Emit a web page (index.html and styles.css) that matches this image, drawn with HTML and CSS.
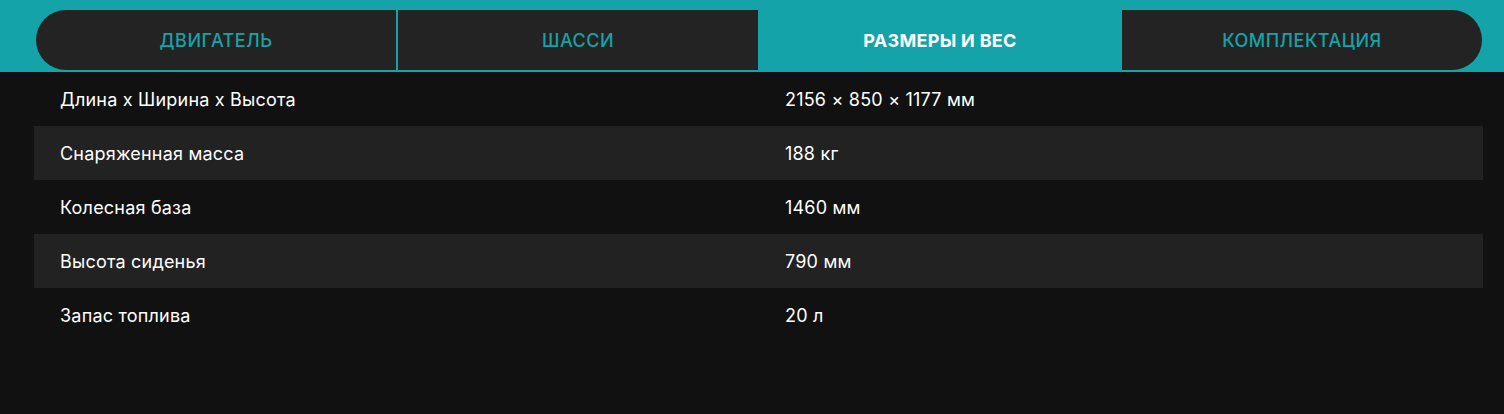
FILE: index.html
```html
<!DOCTYPE html>
<html lang="ru">
<head>
<meta charset="utf-8">
<link rel="stylesheet" href="styles.css">
</head>
<body>
<div class="header">
  <nav class="tabs">
    <div class="tab tab-first">Двигатель</div>
    <div class="tab">Шасси</div>
    <div class="tab tab-active">Размеры и вес</div>
    <div class="tab tab-last">Комплектация</div>
  </nav>
</div>
<div class="specs">
  <div class="row"><div class="cell">Длина х Ширина х Высота</div><div class="cell">2156 × 850 × 1177 мм</div></div>
  <div class="row alt"><div class="cell">Снаряженная масса</div><div class="cell">188 кг</div></div>
  <div class="row"><div class="cell">Колесная база</div><div class="cell">1460 мм</div></div>
  <div class="row alt"><div class="cell">Высота сиденья</div><div class="cell">790 мм</div></div>
  <div class="row"><div class="cell">Запас топлива</div><div class="cell">20 л</div></div>
</div>
</body>
</html>
```

FILE: styles.css
```css
html, body {
  margin: 0;
  padding: 0;
  background: #111111;
  height: 100%;
}
body {
  font-family: Inter, "Noto Sans", sans-serif;
  color: #ffffff;
}
.header {
  background: #14a3a8;
  padding: 10px 22px 2px 36px;
}
.tabs {
  display: flex;
  height: 60px;
}
.tab {
  flex: 1;
  display: flex;
  align-items: center;
  justify-content: center;
  background: #232323;
  color: #14a3a8;
  font-size: 18px;
  font-weight: 500;
  letter-spacing: 0.5px;
  text-transform: uppercase;
  border-left: 2px solid #14a3a8;
}
.tab-first {
  border-left: none;
  border-radius: 30px 0 0 30px;
}
.tab-last {
  border-radius: 0 30px 30px 0;
}
.tab-active {
  background: #14a3a8;
  color: #ffffff;
  font-weight: 700;
  letter-spacing: 0.3px;
}
.specs {
  padding: 0 21px 0 34px;
}
.row {
  display: grid;
  grid-template-columns: 725px 1fr;
  height: 54px;
  align-items: center;
  font-size: 18px;
  letter-spacing: 0.2px;
}
.row.alt {
  background: #222222;
}
.cell {
  padding-left: 26px;
}
```
